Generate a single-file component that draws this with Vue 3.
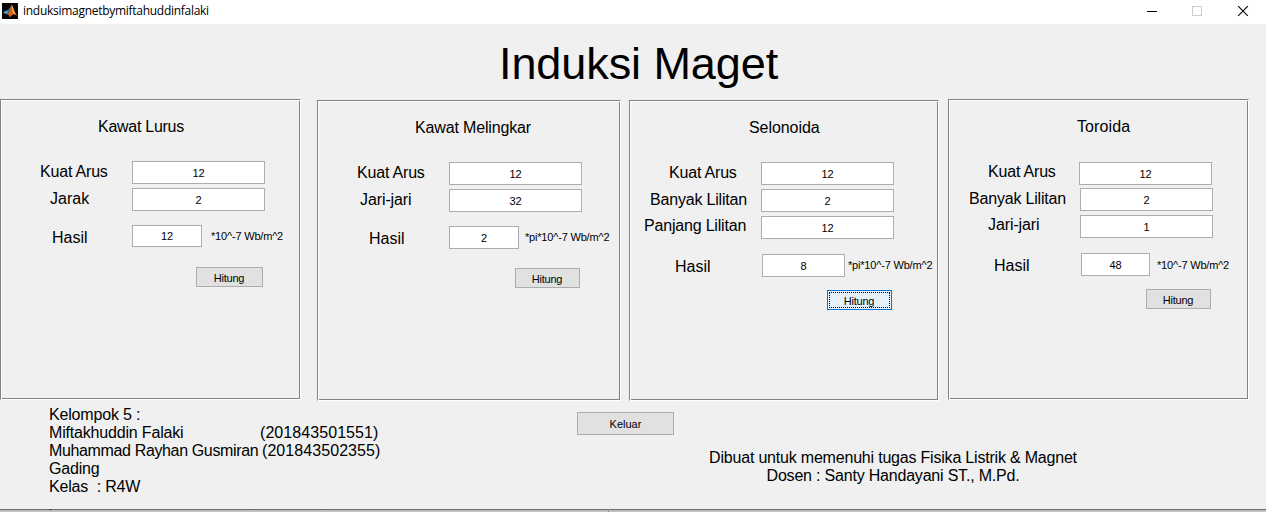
<script setup>
import { reactive } from 'vue'

const panels = reactive([
  {
    id: 'lurus', title: 'Kawat Lurus',
    inputs: [{ label: 'Kuat Arus', value: '12' }, { label: 'Jarak', value: '2' }],
    result: '12', unit: '*10^-7 Wb/m^2', focused: false,
  },
  {
    id: 'melingkar', title: 'Kawat Melingkar',
    inputs: [{ label: 'Kuat Arus', value: '12' }, { label: 'Jari-jari', value: '32' }],
    result: '2', unit: '*pi*10^-7 Wb/m^2', focused: false,
  },
  {
    id: 'selonoida', title: 'Selonoida',
    inputs: [
      { label: 'Kuat Arus', value: '12' },
      { label: 'Banyak Lilitan', value: '2' },
      { label: 'Panjang Lilitan', value: '12' },
    ],
    result: '8', unit: '*pi*10^-7 Wb/m^2', focused: true,
  },
  {
    id: 'toroida', title: 'Toroida',
    inputs: [
      { label: 'Kuat Arus', value: '12' },
      { label: 'Banyak Lilitan', value: '2' },
      { label: 'Jari-jari', value: '1' },
    ],
    result: '48', unit: '*10^-7 Wb/m^2', focused: false,
  },
])
</script>

<template>
  <div class="window">
    <header class="titlebar">
      <svg class="logo" width="16" height="16" viewBox="0 0 16 16">
        <rect width="16" height="16" fill="#050505" />
        <path d="M0.8 9.2 L4.6 7.2 L6.8 9 L4.6 11.4 Z" fill="#4a9cc4" />
        <path d="M4.6 7.2 C6.6 7 7.6 4.6 9.8 1.8 L8.8 7.4 L6.8 9.8 Z" fill="#2f6c90" />
        <path d="M9.8 1.4 C8.6 4.8 7.8 9 4.6 11.4 C6.4 10.8 7 12.6 7.8 14.2 C9.6 13.8 10.4 11.4 12 11 C11.4 8 10.8 4 9.8 1.4 Z" fill="#dc5c1c" />
        <path d="M9.8 1.4 C11.2 4.4 12.8 9.6 15 12.8 C13.4 11.4 12.6 10.8 11.4 11.3 C10.4 8.6 9.8 5 9.8 1.4 Z" fill="#f6a83a" />
      </svg>
      <span class="caption">induksimagnetbymiftahuddinfalaki</span>
      <svg class="controls" width="110" height="24" viewBox="0 0 110 24" shape-rendering="crispEdges">
        <path d="M3 11.5 H13" stroke="#000" fill="none" />
        <rect x="48.500" y="6.500" width="9" height="9" stroke="#ccc" fill="none" />
        <path d="M94.200 6.200 L103.800 15.800 M103.800 6.200 L94.200 15.800" stroke="#000" stroke-width="1.100" fill="none" shape-rendering="auto" />
      </svg>
    </header>

    <main class="figure">
      <h1>Induksi Maget</h1>
      <div class="panels">
        <section v-for="p in panels" :key="p.id" class="panel" :class="p.id">
          <h2>{{ p.title }}</h2>
          <div v-for="(f, i) in p.inputs" :key="i" class="row" :class="'r' + i">
            <span class="label">{{ f.label }}</span>
            <span class="field">{{ f.value }}</span>
          </div>
          <div class="row result">
            <span class="label">Hasil</span>
            <span class="field">{{ p.result }}</span>
            <span class="unit">{{ p.unit }}</span>
          </div>
          <button class="btn" :class="{ focused: p.focused }"><span>Hitung</span></button>
        </section>
      </div>

      <footer class="bottom">
        <div class="group">
          <div>Kelompok 5 :</div>
          <div class="member"><span class="name">Miftakhuddin Falaki</span><span class="nim">(201843501551)</span></div>
          <div class="member"><span class="name second">Muhammad Rayhan Gusmiran</span><span class="nim">(201843502355)</span></div>
          <div>Gading</div>
          <div>Kelas&nbsp; : R4W</div>
        </div>
        <button class="btn exit"><span>Keluar</span></button>
        <div class="note">
          <div>Dibuat untuk memenuhi tugas Fisika Listrik &amp; Magnet</div>
          <div>Dosen : Santy Handayani ST., M.Pd.</div>
        </div>
      </footer>
    </main>
    <div class="edge"><i></i><i></i><i></i><i></i></div>
  </div>
</template>

<style>
html, body { background: #f0f0f0; overflow: hidden; }
</style>

<style scoped>
* { box-sizing: border-box; }
.window {
  width: 1266px; height: 512px; display: flex; flex-direction: column;
  background: #f0f0f0; color: #000; overflow: hidden;
  font-family: "Liberation Sans", Arial, sans-serif; font-size: 16px; line-height: 18px;
  white-space: nowrap;
}
.titlebar { height: 24px; flex: none; display: flex; background: #fff; }
.logo { margin: 3px 5px 0 2px; flex: none; }
.caption {
  font: 12px/16px "Open Sans", "Noto Sans", sans-serif;
  letter-spacing: -0.28px; margin-top: 3px;
}
.controls { margin-left: auto; margin-right: 12px; }

.figure { height: 485px; flex: none; display: flex; flex-direction: column; }
h1 {
  margin: 0; height: 75px; padding: 15px 0 0 499px;
  font-size: 45px; font-weight: 400; line-height: 50px; letter-spacing: -0.08px;
}
.panels { height: 302px; display: flex; align-items: flex-start; }
.panel {
  height: 301px; flex: none; display: flex; flex-direction: column; align-items: flex-start;
  border: 1px solid; border-color: #828282 #fff #fff #828282;
  box-shadow: inset 1px 1px #fff, inset -1px -1px #828282;
}
h2 {
  margin: 0; height: 61px; padding-top: 18px;
  font-size: 16px; font-weight: 400; line-height: 18px; letter-spacing: -0.15px;
}
.row { display: flex; height: 27px; }
.label { width: var(--field-x); padding-top: 2px; letter-spacing: -0.19px; }
.field {
  width: 133px; height: 23px; border: 1px solid #abadb3; background: #fff;
  font-size: 11px; line-height: 22px; text-align: center;
}
.unit { font-size: 11px; line-height: 13px; padding-top: 5px; letter-spacing: -0.19px; }
.result .label { padding-top: 4px; letter-spacing: 0; }
.btn {
  width: 65px; height: 20px; flex: none; padding: 0 1px 0 0; border: 1px solid #adadad; background: #e1e1e1;
  font: 11px/21px "Liberation Sans", Arial, sans-serif; letter-spacing: -0.25px; color: #000;
}
.btn span { display: block; }
.btn.focused { border-color: #0078d7; background: #e5f1fb; outline: 1px dotted #000; outline-offset: -3px; }

.lurus { --field-x: 131px; width: 301px; }
.lurus h2 { padding-left: 97px; letter-spacing: -0.27px; }
.lurus .r0 .label { padding-left: 39px; }
.lurus .r1 .label { padding-left: 49px; letter-spacing: 0; }
.lurus .result { height: 42px; margin-top: 10px; }
.lurus .result .label { padding-left: 51px; }
.lurus .result .field { width: 70px; height: 22px; line-height: 21px; }
.lurus .unit { padding-left: 9px; }
.lurus .btn { width: 67px; margin-left: 195px; }

.melingkar { --field-x: 131px; width: 304px; margin: 1px 0 0 16px; }
.melingkar h2 { padding-left: 97px; }
.melingkar .r0 .label { padding-left: 39px; }
.melingkar .r1 .label { padding-left: 42px; letter-spacing: -0.1px; }
.melingkar .result { height: 42px; margin-top: 10px; }
.melingkar .result .label { padding-left: 51px; }
.melingkar .result .field { width: 70px; }
.melingkar .unit { padding-left: 6px; }
.melingkar .btn { margin-left: 197px; }

.selonoida { --field-x: 131px; width: 310px; margin: 1px 0 0 8px; }
.selonoida h2 { padding-left: 119px; letter-spacing: -0.06px; }
.selonoida .r0 .label { padding-left: 39px; }
.selonoida .r1 .label { padding-left: 20px; }
.selonoida .r2 .label { padding: 1px 0 0 14px; }
.selonoida .result { --field-x: 132px; height: 36px; margin-top: 11px; }
.selonoida .result .label { padding-left: 45px; }
.selonoida .result .field { width: 83px; }
.selonoida .unit { padding-left: 3px; }
.selonoida .btn { margin-left: 197px; }

.toroida { --field-x: 131px; width: 301px; margin-left: 9px; }
.toroida h2 { height: 62px; padding-left: 128px; letter-spacing: 0.1px; }
.toroida .r0 { --field-x: 130px; height: 26px; }
.toroida .r0 .label { padding: 1px 0 0 39px; }
.toroida .r1 .label { padding-left: 20px; }
.toroida .r2 .label { padding: 1px 0 0 39px; letter-spacing: -0.1px; }
.toroida .result { --field-x: 132px; height: 36px; margin-top: 11px; }
.toroida .result .label { padding-left: 45px; }
.toroida .result .field { width: 69px; }
.toroida .unit { padding: 6px 0 0 7px; }
.toroida .btn { margin-left: 197px; }

.bottom { display: flex; align-items: flex-start; }
.group { width: 577px; padding: 5px 0 0 49px; letter-spacing: -0.18px; }
.member { display: flex; }
.name { width: 211px; }
.name.second { width: 213px; letter-spacing: -0.36px; }
.nim { letter-spacing: 0.07px; }
.exit { width: 97px; height: 23px; padding: 0; margin-top: 11px; line-height: 23px; letter-spacing: 0; }
.note { margin: 48px 0 0 35px; width: 368px; text-align: center; letter-spacing: -0.2px; }

.edge {
  height: 3px; flex: none; border-top: 1px solid #707070; background: linear-gradient(#b4b4b4, #c8c8c8);
  display: flex;
}
.edge i { width: 1px; height: 1px; margin-top: -1px; background: #505050; }
.edge i:nth-child(1) { width: 3px; margin-left: 49px; background: #2c5a34; }
.edge i:nth-child(2) { margin-left: 201px; }
.edge i:nth-child(3) { margin-left: 68px; }
.edge i:nth-child(4) { height: 3px; margin-left: 285px; background: #8e8e8e; }
</style>
